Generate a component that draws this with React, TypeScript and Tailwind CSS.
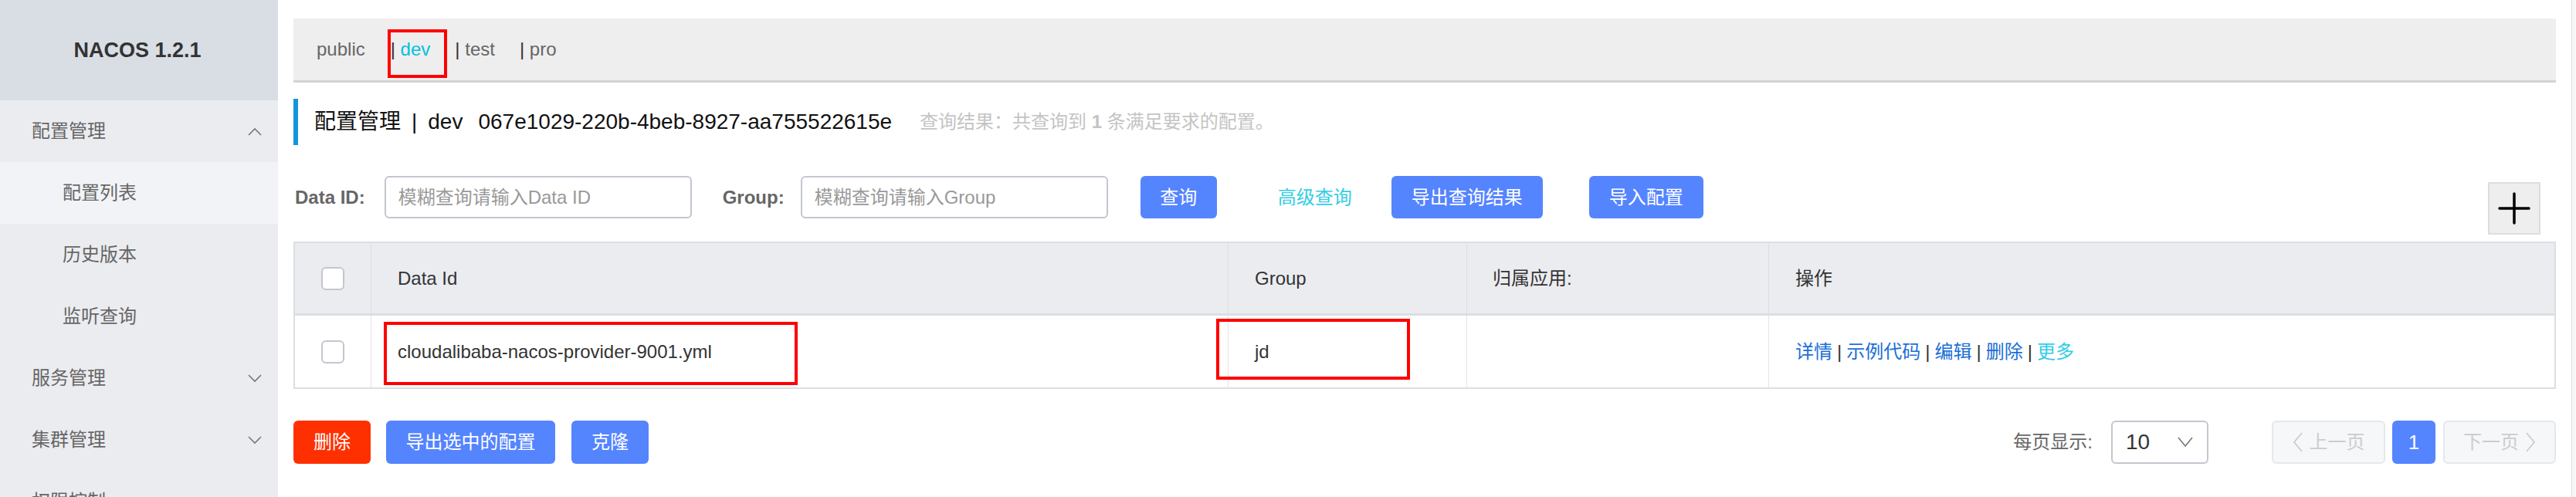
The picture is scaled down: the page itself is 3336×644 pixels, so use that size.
import React from "react";

function Chevron({ up = false }: { up?: boolean }) {
  return (
    <svg width="18" height="11" viewBox="0 0 18 11" fill="none">
      {up ? (
        <polyline points="1,10 9,2 17,10" stroke="#777" strokeWidth="1.6" />
      ) : (
        <polyline points="1,1 9,9 17,1" stroke="#777" strokeWidth="1.6" />
      )}
    </svg>
  );
}

function MenuGroup({ label, up }: { label: string; up?: boolean }) {
  return (
    <div className="h-[80px] shrink-0 flex items-center justify-between pl-[41px] pr-[21px] text-[24px] text-[#666]">
      <span>{label}</span>
      <Chevron up={up} />
    </div>
  );
}

function SubItem({ label, active }: { label: string; active?: boolean }) {
  return (
    <div
      className={
        "h-[80px] shrink-0 flex items-center pl-[81px] text-[24px] text-[#666] " +
        (active ? "bg-[#f2f3f7]" : "")
      }
    >
      {label}
    </div>
  );
}

function BlueBtn({ children, w }: { children: React.ReactNode; w: string }) {
  return (
    <div
      className={
        "h-[55px] rounded-[6px] bg-[#5584ff] text-white text-[24px] flex items-center justify-center " +
        w
      }
    >
      {children}
    </div>
  );
}

export default function App() {
  return (
    <div className="flex h-[644px] w-[3336px] overflow-hidden bg-white font-['Liberation_Sans','Noto_Sans_CJK_SC',sans-serif]">
      <aside className="w-[360px] shrink-0 bg-[#ebecf0] flex flex-col overflow-hidden">
        <div className="h-[130px] shrink-0 bg-[#d9dee5] flex items-center justify-center text-[27px] font-bold text-[#333] pr-[4px]">
          NACOS 1.2.1
        </div>
        <MenuGroup label="配置管理" up />
        <SubItem label="配置列表" active />
        <SubItem label="历史版本" />
        <SubItem label="监听查询" />
        <MenuGroup label="服务管理" />
        <MenuGroup label="集群管理" />
        <div className="h-[80px] shrink-0 flex items-center pl-[41px] text-[24px] text-[#666]">权限控制</div>
      </aside>

      <main className="flex-1 min-w-0 pl-[20px] pr-[20px] pt-[24px] border-r border-[#dedede]">
        {/* namespace bar */}
        <div className="relative h-[83px] bg-[#eeeeee] border-b-[3px] border-[#d3d3d3] flex items-center pl-[30px] text-[24px] text-[#666]">
          <span className="mr-[33px]">public</span>
          <span className="mr-[32px]">
            <span className="text-[#333]">|</span>
            <span className="text-[#00c1de]"> dev</span>
          </span>
          <span className="mr-[32px]">
            <span className="text-[#333]">|</span> test
          </span>
          <span>
            <span className="text-[#333]">|</span> pro
          </span>
          <span className="absolute left-[122px] top-[14px] w-[77px] h-[63px] border-[4px] border-[#ff0000]" />
        </div>

        {/* title */}
        <div className="mt-[21px] h-[60px] border-l-[6px] border-[#1296db] flex items-center pl-[21px]">
          <span className="text-[28px] text-[#111]">配置管理</span>
          <span className="text-[28px] text-[#111] mx-[14px]">|</span>
          <span className="text-[28px] text-[#111]">dev</span>
          <span className="text-[28px] text-[#111] ml-[20px]">067e1029-220b-4beb-8927-aa755522615e</span>
          <span className="text-[24px] text-[#c4c4c4] ml-[36px]">
            查询结果：共查询到 <b className="font-bold">1</b> 条满足要求的配置。
          </span>
        </div>

        {/* search row */}
        <div className="mt-[40px] h-[85px] flex items-start">
          <div className="h-[55px] flex items-center">
            <span className="text-[24px] font-bold text-[#666] ml-[2px]">Data ID:</span>
            <div className="ml-[25px] w-[398px] h-[55px] border-2 border-[#c4c6cf] rounded-[6px] flex items-center pl-[16px] text-[24px] text-[#999]">
              模糊查询请输入Data ID
            </div>
            <span className="ml-[40px] text-[24px] font-bold text-[#666]">Group:</span>
            <div className="ml-[21px] w-[398px] h-[55px] border-2 border-[#c4c6cf] rounded-[6px] flex items-center pl-[16px] text-[24px] text-[#999]">
              模糊查询请输入Group
            </div>
            <div className="ml-[42px]">
              <BlueBtn w="w-[99px]">查询</BlueBtn>
            </div>
            <span className="ml-[79px] text-[24px] text-[#33cde5]">高级查询</span>
            <div className="ml-[51px]">
              <BlueBtn w="w-[196px]">导出查询结果</BlueBtn>
            </div>
            <div className="ml-[60px]">
              <BlueBtn w="w-[148px]">导入配置</BlueBtn>
            </div>
          </div>
          <div className="ml-auto mr-[20px] mt-[8px] w-[68px] h-[68px] bg-[#eeeeee] border-2 border-[#dddddd] flex items-center justify-center">
            <svg width="42" height="42" viewBox="0 0 42 42">
              <line x1="21" y1="2" x2="21" y2="40" stroke="#000" strokeWidth="3.5" strokeLinecap="round" />
              <line x1="2" y1="21" x2="40" y2="21" stroke="#000" strokeWidth="3.5" strokeLinecap="round" />
            </svg>
          </div>
        </div>

        {/* table */}
        <div className="border-2 border-[#dcdee3] text-[24px] text-[#333]">
          <div className="flex h-[94px] bg-[#ebecf0] border-b-[3px] border-[#dcdee3]">
            <div className="w-[98px] shrink-0 flex items-center justify-center">
              <div className="w-[30px] h-[30px] bg-white border-2 border-[#c4c6cf] rounded-[6px]" />
            </div>
            <div className="w-[1110px] shrink-0 border-l border-[#dcdee3] flex items-center pl-[34px]">Data Id</div>
            <div className="w-[309px] shrink-0 border-l border-[#dcdee3] flex items-center pl-[34px]">Group</div>
            <div className="w-[391px] shrink-0 border-l border-[#dcdee3] flex items-center pl-[33px]">归属应用:</div>
            <div className="flex-1 border-l border-[#dcdee3] flex items-center pl-[34px]">操作</div>
          </div>
          <div className="flex h-[93px] bg-white">
            <div className="w-[98px] shrink-0 flex items-center justify-center">
              <div className="w-[30px] h-[30px] bg-white border-2 border-[#c4c6cf] rounded-[6px]" />
            </div>
            <div className="w-[1110px] shrink-0 border-l border-[#e3e4e8] flex items-center pl-[34px] relative">
              cloudalibaba-nacos-provider-9001.yml
              <span className="absolute left-[16px] top-[8px] w-[536px] h-[82px] border-[4px] border-[#ff0000]" />
            </div>
            <div className="w-[309px] shrink-0 border-l border-[#e3e4e8] flex items-center pl-[34px] relative">
              jd
              <span className="absolute left-[-16px] top-[4px] w-[251px] h-[79px] border-[4px] border-[#ff0000]" />
            </div>
            <div className="w-[391px] shrink-0 border-l border-[#e3e4e8]" />
            <div className="flex-1 border-l border-[#e3e4e8] flex items-center pl-[34px] text-[#1a6fd6]">
              <span>详情</span>
              <span className="text-[#333] mx-[6px]">|</span>
              <span>示例代码</span>
              <span className="text-[#333] mx-[6px]">|</span>
              <span>编辑</span>
              <span className="text-[#333] mx-[6px]">|</span>
              <span>删除</span>
              <span className="text-[#333] mx-[6px]">|</span>
              <span className="text-[#33cde5]">更多</span>
            </div>
          </div>
        </div>

        {/* bottom row */}
        <div className="mt-[41px] flex items-center h-[56px]">
          <div className="w-[100px] h-[56px] rounded-[6px] bg-[#ff3000] text-white text-[24px] flex items-center justify-center">删除</div>
          <div className="ml-[20px] w-[219px] h-[56px] rounded-[6px] bg-[#5584ff] text-white text-[24px] flex items-center justify-center">导出选中的配置</div>
          <div className="ml-[21px] w-[100px] h-[56px] rounded-[6px] bg-[#5584ff] text-white text-[24px] flex items-center justify-center">克隆</div>

          <div className="ml-auto flex items-center">
            <span className="text-[24px] text-[#666]">每页显示:</span>
            <div className="ml-[24px] w-[126px] h-[56px] border-2 border-[#c4c6cf] rounded-[6px] flex items-center justify-between pl-[17px] pr-[18px]">
              <span className="text-[28px] text-[#333]">10</span>
              <svg width="20" height="14" viewBox="0 0 20 14" fill="none">
                <polyline points="1,1 10,12 19,1" stroke="#777" strokeWidth="1.6" />
              </svg>
            </div>
            <div className="ml-[82px] w-[147px] h-[56px] rounded-[6px] bg-[#f6f7f9] border-2 border-[#e6e7eb] flex items-center justify-center text-[24px] text-[#cccccc]">
              <svg width="14" height="26" viewBox="0 0 14 26" fill="none" className="mr-[8px]">
                <polyline points="12,1 2,13 12,25" stroke="#cccccc" strokeWidth="1.8" />
              </svg>
              上一页
            </div>
            <div className="ml-[9px] w-[56px] h-[56px] rounded-[6px] bg-[#5584ff] text-white text-[26px] flex items-center justify-center">1</div>
            <div className="ml-[10px] w-[146px] h-[56px] rounded-[6px] bg-[#f6f7f9] border-2 border-[#e6e7eb] flex items-center justify-center text-[24px] text-[#cccccc]">
              下一页
              <svg width="14" height="26" viewBox="0 0 14 26" fill="none" className="ml-[8px]">
                <polyline points="2,1 12,13 2,25" stroke="#cccccc" strokeWidth="1.8" />
              </svg>
            </div>
          </div>
        </div>
      </main>
      <div className="w-[5px] shrink-0 bg-[#f7f7f7]" />
    </div>
  );
}
